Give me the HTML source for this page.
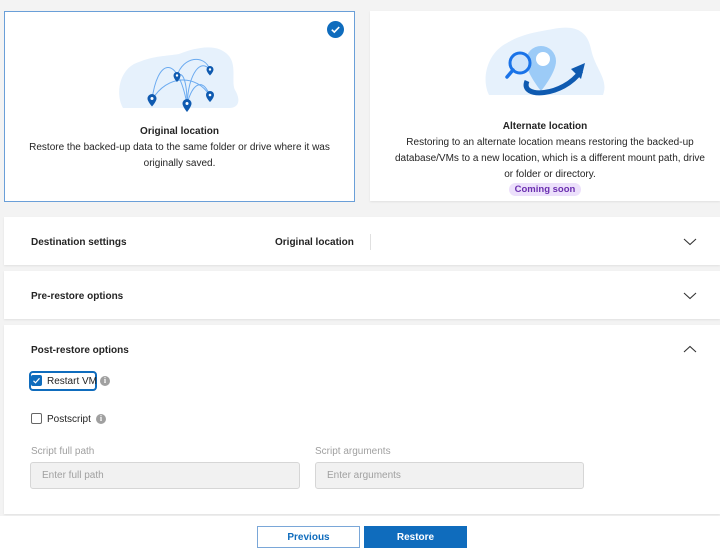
<!DOCTYPE html>
<html><head><meta charset="utf-8">
<style>
*{box-sizing:border-box;margin:0;padding:0}
body{width:720px;height:556px;background:#f3f3f3;font-family:"Liberation Sans",sans-serif;color:#242424;position:relative;overflow:hidden;font-size:10px}
.card{position:absolute;background:#fff;text-align:center}
.c1{left:4px;top:11px;width:351px;height:191px;border:1px solid #6a9fd8}
.c2{left:370px;top:11px;width:350px;height:190px;box-shadow:0 1px 2px rgba(0,0,0,.08)}
.title{font-weight:bold;font-size:10px;color:#242424}
.desc{font-size:10px;line-height:16px;color:#242424}
.panel{position:absolute;left:4px;width:716px;background:#fff;box-shadow:0 1px 2px rgba(0,0,0,.08)}
.ph{position:absolute;left:27px;font-weight:bold;font-size:10px}
.chev{position:absolute;left:679px}
.cb{position:absolute;width:11px;height:11px;border:1px solid #666;border-radius:2px;background:#fff}
.lbl{position:absolute;font-size:10px;color:#242424}
.info{position:absolute;width:10px;height:10px;border-radius:50%;background:#a0a0a0;color:#fff;font-size:8px;font-weight:bold;text-align:center;line-height:10px;font-family:"Liberation Serif",serif}
.inp{position:absolute;height:27px;background:#f1f1f1;border:1px solid #d6d6d6;border-radius:3px;color:#a0a0a0;font-size:10px;line-height:25px;padding-left:11px}
.btn{position:absolute;top:526px;width:103px;height:22px;font-weight:bold;font-size:10px;text-align:center;line-height:22px;border:1px solid #0f6cbd}
</style></head><body>
<div class="card c1">
 <svg style="position:absolute;left:322px;top:9px" width="17" height="17" viewBox="0 0 17 17"><circle cx="8.5" cy="8.5" r="8.5" fill="#0f6cbd"/><path d="M4.8 8.7l2.5 2.4 4.9-5" stroke="#fff" stroke-width="1.6" fill="none"/></svg>
 <svg style="position:absolute;left:112px;top:30px" width="125" height="70" viewBox="0 0 125 70">
  <path d="M6 66 C-2 52 2 26 22 20 C36 14 50 14 62 12 C78 6 100 0 112 14 C120 24 114 40 118 48 C124 58 122 66 112 66Z" fill="#e6f1fc"/>
  <g stroke="#6aaaf0" stroke-width="1" fill="none">
   <path d="M35 58 C40 18 60 10 70 62"/><path d="M35 58 C50 32 80 32 93 54"/><path d="M60 34 C66 14 88 12 93 28"/><path d="M70 62 C72 30 84 16 93 28"/><path d="M70 62 C76 40 86 36 93 54"/><path d="M60 34 C66 28 70 40 70 62"/>
  </g>
  <g fill="#0f5ab0">
   <path d="M35 52a4.5 4.5 0 0 1 4.5 4.5c0 3-4.5 8-4.5 8s-4.5-5-4.5-8a4.5 4.5 0 0 1 4.5-4.5z"/>
   <path d="M70 57a4.5 4.5 0 0 1 4.5 4.5c0 3-4.5 8.5-4.5 8.5s-4.5-5.5-4.5-8.5a4.5 4.5 0 0 1 4.5-4.5z"/>
   <path d="M93 49a4 4 0 0 1 4 4c0 3-4 7-4 7s-4-4-4-7a4 4 0 0 1 4-4z"/>
   <path d="M60 30a3.5 3.5 0 0 1 3.5 3.5c0 3-3.5 6.5-3.5 6.5s-3.5-3.5-3.5-6.5a3.5 3.5 0 0 1 3.5-3.5z"/>
   <path d="M93 24a3.5 3.5 0 0 1 3.5 3.5c0 2.5-3.5 6-3.5 6s-3.5-3.5-3.5-6a3.5 3.5 0 0 1 3.5-3.5z"/>
  </g>
  <g fill="#fff"><circle cx="35" cy="56.5" r="1.5"/><circle cx="70" cy="61.5" r="1.5"/><circle cx="93" cy="53" r="1.3"/><circle cx="60" cy="33.5" r="1.2"/><circle cx="93" cy="27.5" r="1.2"/></g>
 </svg>
 <div class="title" style="position:absolute;top:114px;width:100%">Original location</div>
 <div class="desc" style="position:absolute;top:128px;left:22px;right:22px">Restore the backed-up data to the same folder or drive where it was originally saved.</div>
</div>
<div class="card c2">
 <svg style="position:absolute;left:113px;top:8px" width="128" height="80" viewBox="0 0 128 80">
  <path d="M6 76 C-2 60 4 34 24 24 C40 14 60 12 70 10 C90 6 104 10 108 30 C112 50 126 60 120 76Z" fill="#e6f1fc"/>
  <path d="M58 27a15 15 0 0 1 15 15c0 12-15 30-15 30s-15-18-15-30a15 15 0 0 1 15-15z" fill="#9ccbf7"/>
  <circle cx="60" cy="40" r="7" fill="#fff"/>
  <circle cx="37" cy="44" r="10" fill="#cfe4fb" stroke="#1a73e8" stroke-width="3"/>
  <path d="M30 51l-6 7" stroke="#1a73e8" stroke-width="3.5" stroke-linecap="round"/>
  <path d="M44 62 C36 80 80 78 98 52" stroke="#0f5ab0" stroke-width="5" fill="none"/>
  <path d="M88 50l14-6-4 16z" fill="#0f5ab0"/>
 </svg>
 <div class="title" style="position:absolute;top:110px;width:100%">Alternate location</div>
 <div class="desc" style="position:absolute;top:124px;left:24px;right:14px">Restoring to an alternate location means restoring the backed-up database/VMs to a new location, which is a different mount path, drive or folder or directory.</div>
 <div style="position:absolute;left:139px;top:172px;width:72px;height:13px;border-radius:7px;background:#ece0fb;color:#6b2fb0;font-weight:bold;font-size:9.5px;line-height:13px">Coming soon</div>
</div>

<div class="panel" style="top:217px;height:48px">
 <div class="ph" style="top:20px">Destination settings</div>
 <div style="position:absolute;left:271px;top:20px;font-weight:bold">Original location</div>
 <div style="position:absolute;left:366px;top:17px;width:1px;height:16px;background:#e0e0e0"></div>
 <svg class="chev" style="top:21px" width="14" height="8"><path d="M1 1l6 5.5 6-5.5" stroke="#333" fill="none" stroke-width="1.1"/></svg>
</div>
<div class="panel" style="top:271px;height:48px">
 <div class="ph" style="top:20px">Pre-restore options</div>
 <svg class="chev" style="top:21px" width="14" height="8"><path d="M1 1l6 5.5 6-5.5" stroke="#333" fill="none" stroke-width="1.1"/></svg>
</div>
<div class="panel" style="top:325px;height:189px">
 <div class="ph" style="top:20px">Post-restore options</div>
 <svg class="chev" style="top:20px" width="14" height="8"><path d="M1 7l6-5.5 6 5.5" stroke="#333" fill="none" stroke-width="1.1"/></svg>
 <div style="position:absolute;left:25px;top:46px;width:68px;height:20px;border:2px solid #0f6cbd;border-radius:4px"></div>
 <div class="cb" style="left:27px;top:50px;background:#0f6cbd;border-color:#0f6cbd"><svg width="9" height="9" style="position:absolute;left:0;top:0"><path d="M1.5 4.8l2 2 4-4.5" stroke="#fff" stroke-width="1.2" fill="none"/></svg></div>
 <div class="lbl" style="left:43px;top:51px">Restart VM</div>
 <div class="info" style="left:96px;top:51px">i</div>
 <div class="cb" style="left:27px;top:88px"></div>
 <div class="lbl" style="left:43px;top:89px">Postscript</div>
 <div class="info" style="left:92px;top:89px">i</div>
 <div class="lbl" style="left:27px;top:121px;color:#a0a0a0">Script full path</div>
 <div class="lbl" style="left:311px;top:121px;color:#a0a0a0">Script arguments</div>
 <div class="inp" style="left:26px;top:137px;width:270px">Enter full path</div>
 <div class="inp" style="left:311px;top:137px;width:269px">Enter arguments</div>
</div>
<div style="position:absolute;left:0;top:516px;width:720px;height:40px;background:#fff"></div>
<div class="btn" style="left:257px;background:#fff;color:#0f6cbd;border-color:#7aa7d8">Previous</div>
<div class="btn" style="left:364px;background:#0f6cbd;color:#fff">Restore</div>
</body></html>
